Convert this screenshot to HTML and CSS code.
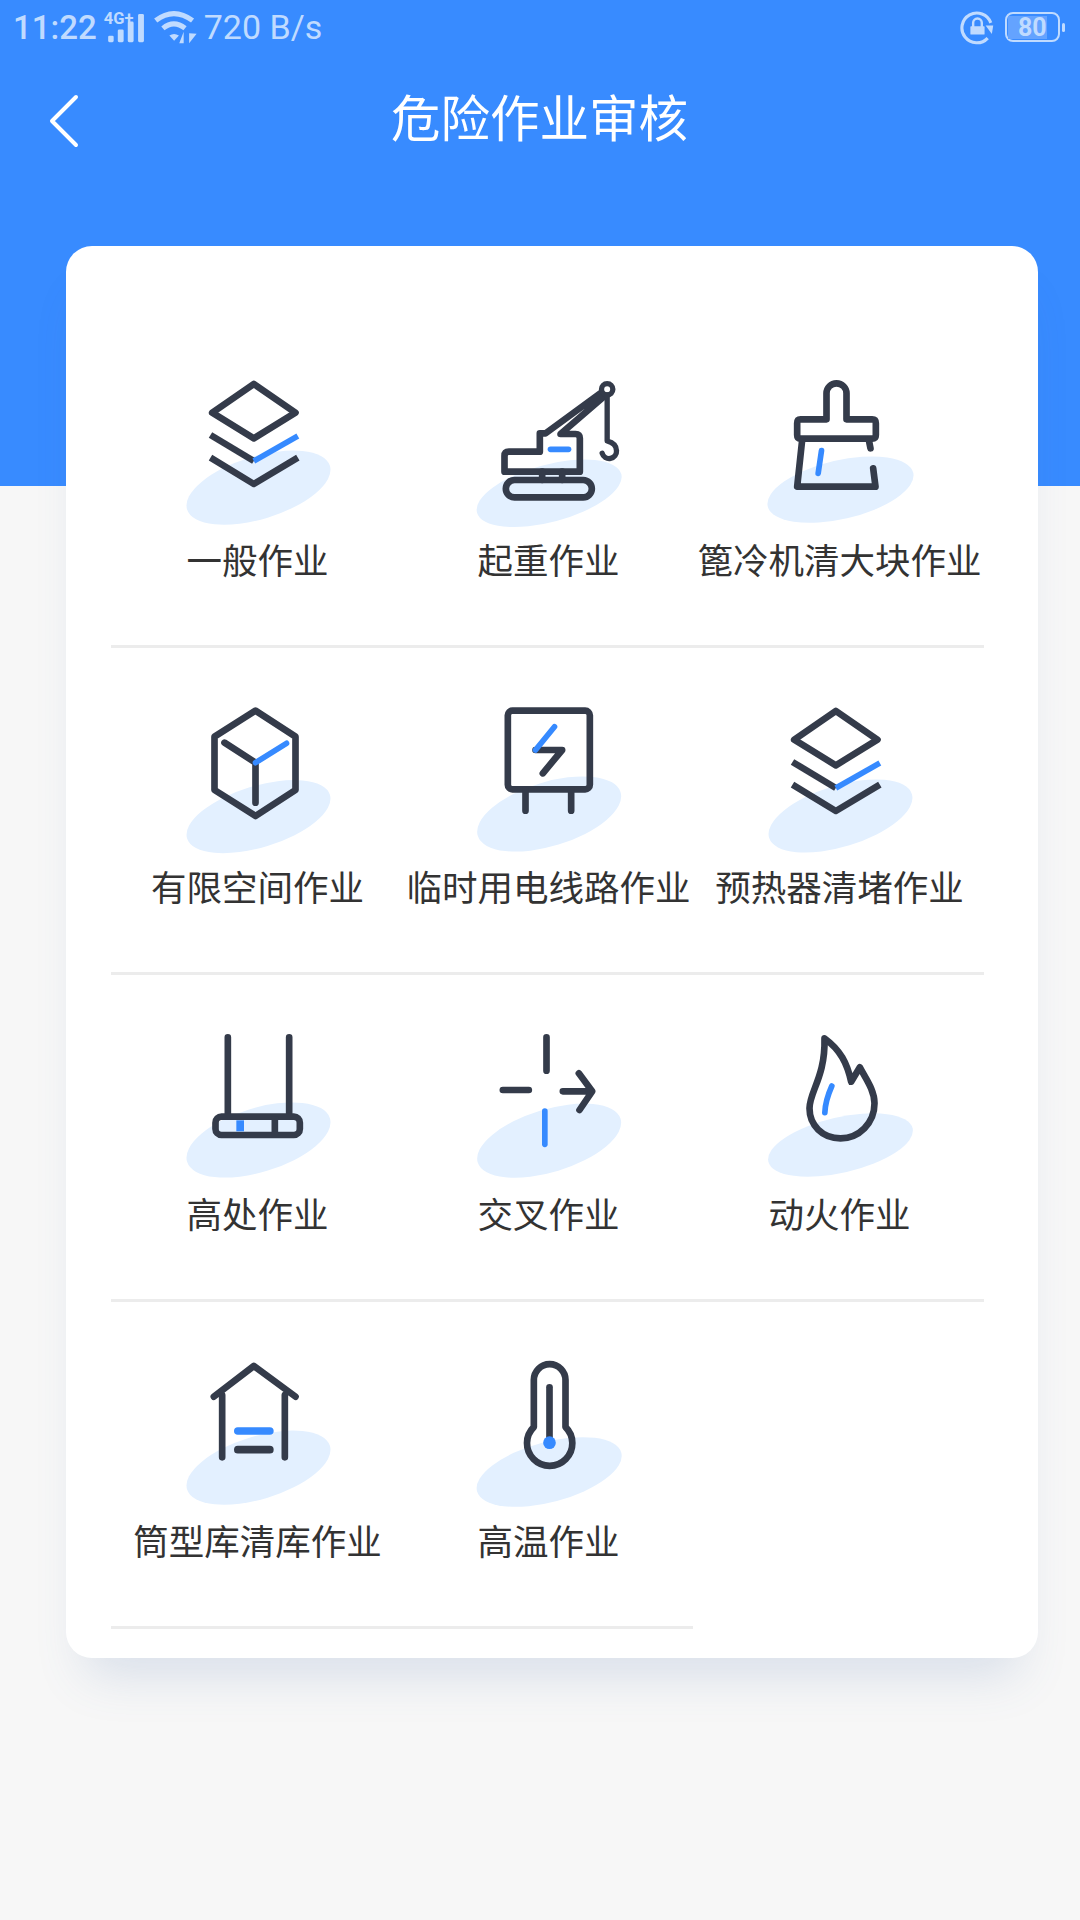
FILE: index.html
```html
<!DOCTYPE html>
<html lang="zh-CN">
<head>
    <meta charset="UTF-8">
    <meta name="viewport" content="width=device-width, initial-scale=1.0">
    <title>危险作业审核</title>
    <link rel="stylesheet" href="styles.css">
</head>
<body>
    <div class="status-bar">
        <span class="time">11:22</span>
        <svg class="signal" viewBox="300 20 125 110">
            <text class="signal-text" x="302" y="69">4G+</text>
            <rect x="315" y="103" width="16" height="19" rx="4"/>
            <rect x="343" y="85" width="17" height="37" rx="4"/>
            <rect x="372" y="62" width="17" height="60" rx="4"/>
            <rect x="402" y="40" width="17" height="82" rx="4"/>
        </svg>
        <svg class="wifi" viewBox="444 30 132 104">
            <path class="wifi-arc" d="M452 63Q505 22 560 63"/>
            <path class="wifi-arc" d="M473 86Q505 60 538 86"/>
            <path d="M492 107Q506 98 520 107L506 122Z"/>
            <path d="M534 96L534 130L521 130ZM550 100L572 102L550 130Z"/>
        </svg>
        <span class="speed">720 B/s</span>
        <svg class="rotate-lock" viewBox="1216 28 104 104">
            <path class="lock-ring" d="M1305 68A43 43 0 1 0 1296 112"/>
            <path d="M1290 76L1312 76L1308 100Z"/>
            <path class="lock-shackle" d="M1254 80V68A12 12 0 0 1 1279 68V80"/>
            <rect x="1246" y="78" width="41" height="24" rx="2"/>
        </svg>
        <div class="battery">
            <div class="battery-level">80</div>
        </div>
        <div class="battery-nub"></div>
    </div>

    <div class="nav-bar">
        <svg class="back" viewBox="0 0 40 64">
            <path d="M32 8L8 32L32 56"/>
        </svg>
        <h1>危险作业审核</h1>
    </div>

    <div class="card">
        <div class="grid">
            <div class="item">
                <svg class="icon" viewBox="49.5 30 480 480">
                    <ellipse class="shade" cx="294" cy="383" rx="224" ry="94" transform="rotate(-17 294 383)"/>
                    <path class="line" d="M280 72L405 158L280 235L155 158Z"/>
                    <path class="line butt" d="M150 225L280 303"/>
                    <path class="accent butt" d="M280 303L412 228"/>
                    <path class="line butt" d="M150 293L280 372L412 293"/>
                </svg>
                <span class="label">一般作业</span>
            </div>
            <div class="item">
                <svg class="icon" viewBox="52.5 30 480 480">
                    <ellipse class="shade" cx="296" cy="400" rx="224" ry="86" transform="rotate(-15 296 400)"/>
                    <path class="line" d="M452 98L285 220H268V275H175Q162 275 162 288V335H388V235Q388 222 375 222H330L458 112"/>
                    <path class="line" d="M275 335V360M335 335V360"/>
                    <rect class="line" x="166" y="360" width="258" height="52" rx="26"/>
                    <circle class="line thin" cx="470" cy="88" r="17"/>
                    <path class="line thin" d="M470 105V243Q498 250 498 272A22 22 0 0 1 455 280"/>
                    <path class="accent" d="M300 268H354"/>
                </svg>
                <span class="label">起重作业</span>
            </div>
            <div class="item">
                <svg class="icon" viewBox="55.5 30 480 480">
                    <ellipse class="shade" cx="300" cy="389" rx="224" ry="88" transform="rotate(-13 300 389)"/>
                    <path class="line" d="M258 178V100A30 30 0 0 1 318 100V178H395Q406 178 406 190V225Q406 236 395 236H180Q170 236 170 225V190Q170 178 180 178Z"/>
                    <path class="line" d="M185 240L170 380H405L398 325M385 240L390 265"/>
                    <path class="accent" d="M243 272L233 340"/>
                </svg>
                <span class="label">篦冷机清大块作业</span>
            </div>
            <div class="item">
                <svg class="icon" viewBox="49.5 21 480 480">
                    <ellipse class="shade" cx="294" cy="380" rx="224" ry="92" transform="rotate(-17 294 380)"/>
                    <path class="line" d="M285 62L405 140V300L285 378L162 300V140Z"/>
                    <path class="line" d="M192 158L285 218V338"/>
                    <path class="accent" d="M285 218L378 160"/>
                </svg>
                <span class="label">有限空间作业</span>
            </div>
            <div class="item">
                <svg class="icon" viewBox="52.5 21 480 480">
                    <ellipse class="shade" cx="296" cy="372" rx="224" ry="96" transform="rotate(-17 296 372)"/>
                    <rect class="line" x="172" y="62" width="246" height="236" rx="14"/>
                    <path class="line" d="M225 298V362M362 298V362"/>
                    <path class="line" d="M255 180H335L277 250"/>
                    <path class="accent" d="M312 110L255 180"/>
                </svg>
                <span class="label">临时用电线路作业</span>
            </div>
            <div class="item">
                <svg class="icon" viewBox="49.5 30 480 480">
                    <ellipse class="shade" cx="294" cy="387" rx="224" ry="92" transform="rotate(-17 294 387)"/>
                    <path class="line" d="M280 72L405 158L280 235L155 158Z"/>
                    <path class="line butt" d="M150 225L280 303"/>
                    <path class="accent butt" d="M280 303L412 228"/>
                    <path class="line butt" d="M150 293L280 372L412 293"/>
                </svg>
                <span class="label">预热器清堵作业</span>
            </div>
            <div class="item">
                <svg class="icon" viewBox="49.5 12 480 480">
                    <ellipse class="shade" cx="294" cy="360" rx="224" ry="96" transform="rotate(-17 294 360)"/>
                    <path class="line" d="M202 52V290M386 52V290"/>
                    <rect class="line" x="165" y="290" width="253" height="55" rx="18"/>
                    <path class="line butt" d="M343 290V345"/>
                    <path class="accent butt wide" d="M239 301V334"/>
                </svg>
                <span class="label">高处作业</span>
            </div>
            <div class="item">
                <svg class="icon" viewBox="52.5 12 480 480">
                    <ellipse class="shade" cx="296" cy="362" rx="224" ry="94" transform="rotate(-17 296 362)"/>
                    <path class="line" d="M288 52V152M157 210H235M337 214H420M385 160L425 214L387 270"/>
                    <path class="accent" d="M283 273V373"/>
                </svg>
                <span class="label">交叉作业</span>
            </div>
            <div class="item">
                <svg class="icon" viewBox="55.5 12 480 480">
                    <ellipse class="shade" cx="300" cy="375" rx="222" ry="83" transform="rotate(-13 300 375)"/>
                    <path class="line" d="M252 55C300 90 320 130 332 185L358 142C375 175 402 210 402 250C402 310 355 355 300 355C245 355 207 315 207 265C207 215 255 170 252 55Z"/>
                    <path class="accent" d="M274 198C262 225 254 250 253 278"/>
                </svg>
                <span class="label">动火作业</span>
            </div>
            <div class="item">
                <svg class="icon" viewBox="49.5 33 480 480">
                    <ellipse class="shade" cx="294" cy="383" rx="224" ry="94" transform="rotate(-17 294 383)"/>
                    <path class="line" d="M160 170L280 78L405 170M185 165V352M373 165V352"/>
                    <path class="line wide" d="M232 329H328"/>
                    <path class="accent wide" d="M232 273H328"/>
                </svg>
                <span class="label">筒型库清库作业</span>
            </div>
            <div class="item">
                <svg class="icon" viewBox="52.5 33 480 480">
                    <ellipse class="shade" cx="296" cy="396" rx="224" ry="90" transform="rotate(-15 296 396)"/>
                    <path class="line" d="M250 261V120A47.5 47.5 0 0 1 345 120V261A68 68 0 1 1 250 261Z"/>
                    <path class="line" d="M297 142V305"/>
                    <circle class="dot" cx="297" cy="308" r="19"/>
                </svg>
                <span class="label">高温作业</span>
            </div>
        </div>
    </div>
</body>
</html>
```

FILE: styles.css
```css
body {
    margin: 0;
    height: 1920px;
    overflow: hidden;
    font-family: "Noto Sans CJK SC", "Noto Sans", sans-serif;
    background: linear-gradient(#388bff 486px, #f7f7f7 486px);
}
.status-bar {
    display: flex;
    align-items: center;
    height: 54px;
    padding: 0 15px 0 13px;
    box-sizing: border-box;
    font-family: Roboto, sans-serif;
    font-size: 33px;
    color: #c0dbff;
    fill: #c0dbff;
}
.time {
    font-weight: 500;
}
.signal {
    width: 43px;
    height: 38px;
    margin: 0 0 3px 6px;
}
.signal-text {
    font-size: 48px;
    font-weight: 700;
}
.wifi {
    width: 45px;
    height: 36px;
    margin-left: 7px;
}
.wifi-arc {
    fill: none;
    stroke: #c0dbff;
    stroke-width: 15;
}
.speed {
    margin-left: 6px;
    font-size: 34px;
}
.rotate-lock {
    width: 36px;
    height: 36px;
    margin-left: auto;
}
.lock-ring, .lock-shackle {
    fill: none;
    stroke: #c0dbff;
    stroke-width: 9;
}
.lock-shackle {
    stroke-width: 7;
}
.battery {
    width: 55px;
    height: 30px;
    margin-left: 9px;
    padding: 1px;
    box-sizing: border-box;
    display: flex;
    align-items: center;
    border: 2px solid #c0dbff;
    border-radius: 8px;
}
.battery-level {
    width: 39px;
    height: 23px;
    line-height: 24px;
    padding-left: 10px;
    box-sizing: border-box;
    background: #64a3ff;
    font-size: 25px;
    font-weight: 700;
}
.battery-nub {
    width: 3px;
    height: 9px;
    margin-left: 2px;
    border-radius: 2px;
    background: #c0dbff;
}
.nav-bar {
    display: flex;
    align-items: center;
    height: 138px;
    padding-left: 44px;
}
.back {
    width: 40px;
    height: 64px;
    margin-bottom: 4px;
}
.back path {
    fill: none;
    stroke: #fff;
    stroke-width: 4;
    stroke-linecap: round;
    stroke-linejoin: round;
}
h1 {
    margin: 0 0 15px 307px;
    font-size: 49.5px;
    font-weight: 400;
    line-height: 70px;
    color: #fff;
}
.card {
    width: 972px;
    height: 1412px;
    margin: 54px 0 0 66px;
    padding: 75px 0 0 45px;
    box-sizing: border-box;
    background: #fff;
    border-radius: 26px;
    box-shadow: 0 36px 50px -20px rgba(70, 110, 170, 0.18);
}
.grid {
    display: grid;
    grid-template-columns: repeat(3, 291px);
    grid-auto-rows: 327px;
}
.item {
    display: flex;
    flex-direction: column;
    align-items: center;
    padding-top: 49px;
    box-sizing: border-box;
    border-bottom: 3px solid #ececec;
}
.icon {
    width: 160px;
    height: 160px;
    flex: none;
}
.label {
    margin: 4px 0 0 2px;
    font-size: 35.5px;
    line-height: 50px;
    color: #333;
    white-space: nowrap;
}
.shade {
    fill: #e3f0ff;
}
.line, .accent {
    fill: none;
    stroke: #343b4a;
    stroke-width: 20;
    stroke-linecap: round;
    stroke-linejoin: round;
}
.accent {
    stroke: #368aff;
    stroke-width: 17;
}
.butt {
    stroke-linecap: butt;
}
.thin {
    stroke-width: 16;
}
.wide {
    stroke-width: 23;
}
.dot {
    fill: #368aff;
}
```
